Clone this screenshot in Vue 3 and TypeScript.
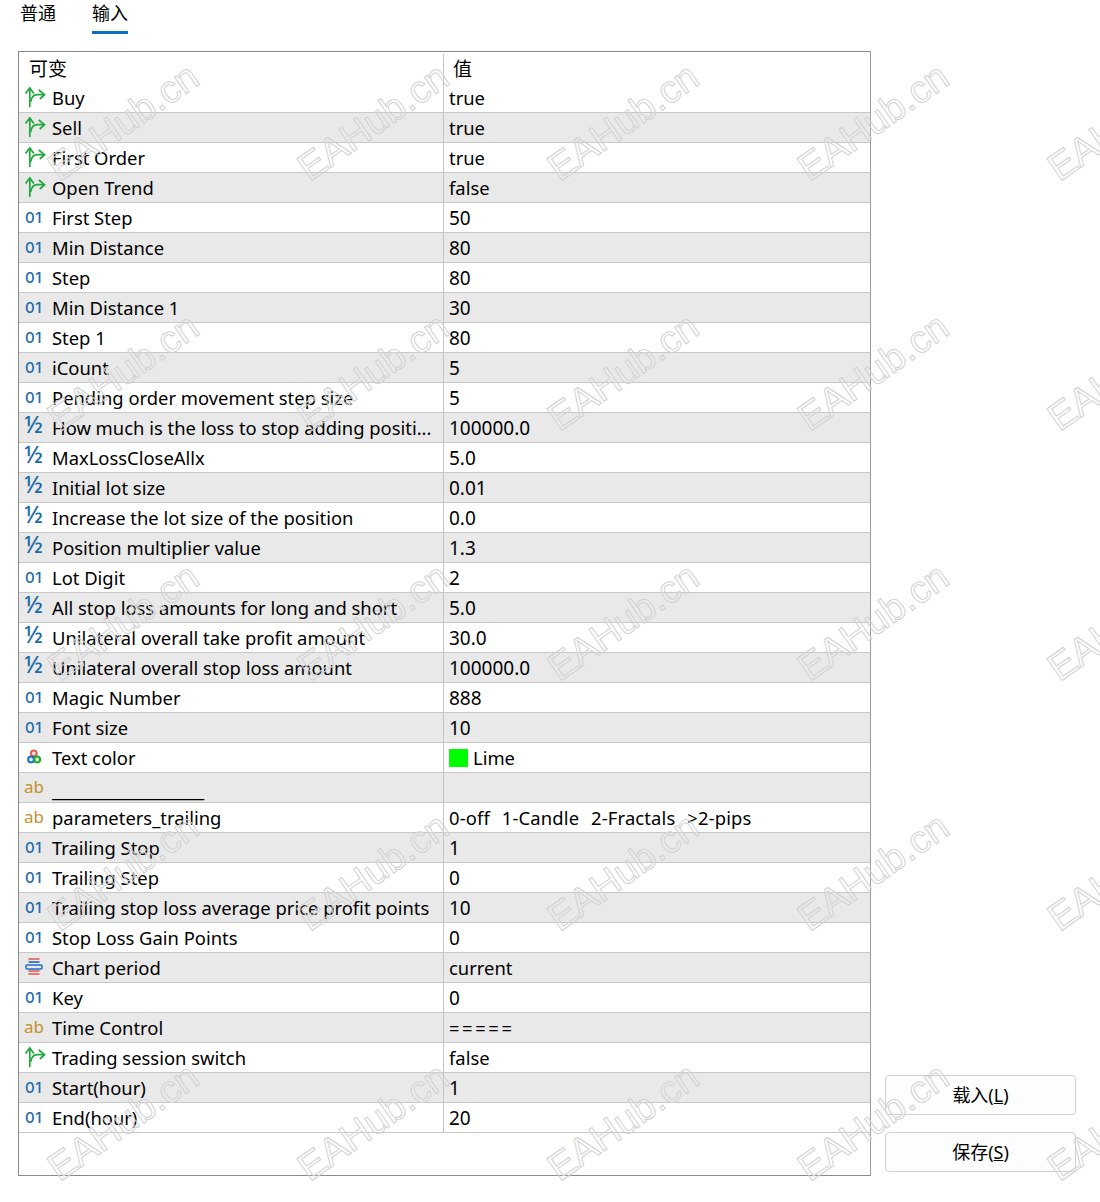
<template>
  <div class="page">
    <nav class="tabs">
      <span class="tab">普通</span>
      <span class="tab active">输入</span>
    </nav>
    <div class="body">
      <div class="table">
        <div class="head">
          <div class="name-col">可变</div>
          <div class="value-col">值</div>
        </div>
        <div v-for="(row, i) in rows" :key="`${row.name}-${i}`" class="row" :class="{ alt: i % 2 === 1 }">
          <div class="name-cell">
            <span class="icon">
              <svg v-if="row.type === 'bool'" width="22" height="22" viewBox="0 0 22 22" fill="none" stroke="#1fa83c" stroke-width="1.7">
                <path d="M4.8 22 V3" />
                <path d="M0.5 8.5 L4.8 3 L8.8 8.5" />
                <path d="M5.5 17 C6.5 12 8 9.7 12 9.7 H19" />
                <path d="M13.8 5 L19.5 9.7 L14.8 14" />
              </svg>
              <span v-else-if="row.type === 'int'" class="i-int">01</span>
              <span v-else-if="row.type === 'float'" class="i-float">½</span>
              <span v-else-if="row.type === 'str'" class="i-str">ab</span>
              <svg v-else-if="row.type === 'color'" class="shift" width="18" height="18" viewBox="0 0 18 18" stroke-width="2">
                <circle cx="8.8" cy="6.3" r="2.9" stroke="#e05a50" fill="#fde4e0" />
                <circle cx="6" cy="12.5" r="2.9" stroke="#1a6fc4" fill="#d2e8ff" />
                <circle cx="12.2" cy="12.5" r="2.9" stroke="#22a830" fill="#d8f5d8" />
              </svg>
              <svg v-else class="shift" width="18" height="18" viewBox="0 0 18 18" fill="none" stroke-width="1.5">
                <path d="M3.5 2 H14.5 M3.5 14 H14.5 M3.5 17 H14.5" stroke="#e0524f" />
                <path d="M3.5 5 H14.5" stroke="#1a5f9e" />
                <rect x="1" y="8" width="16" height="4" rx="1" stroke="#1a6fc4" />
              </svg>
            </span>
            <span class="label" :class="{ line: row.name.startsWith('_') }">{{ row.name }}</span>
          </div>
          <div class="value-cell">
            <span v-if="row.swatch" class="swatch" :style="{ background: row.swatch }"></span>
            <span class="value" :class="valueClass(row.value)">{{ row.value }}</span>
          </div>
        </div>
      </div>
      <div class="actions">
        <button class="btn" type="button">载入(<u>L</u>)</button>
        <button class="btn" type="button">保存(<u>S</u>)</button>
      </div>
    </div>
    <div class="watermarks" aria-hidden="true">
      <span v-for="m in marks" :key="m" class="mark">EAHub.cn</span>
    </div>
  </div>
</template>

<script setup lang="ts">
type ParamType = 'bool' | 'int' | 'float' | 'str' | 'color' | 'period'

interface Param {
  name: string
  value: string
  type: ParamType
  swatch?: string
}

const rows: Param[] = [
  { name: 'Buy', value: 'true', type: 'bool' },
  { name: 'Sell', value: 'true', type: 'bool' },
  { name: 'First Order', value: 'true', type: 'bool' },
  { name: 'Open Trend', value: 'false', type: 'bool' },
  { name: 'First Step', value: '50', type: 'int' },
  { name: 'Min Distance', value: '80', type: 'int' },
  { name: 'Step', value: '80', type: 'int' },
  { name: 'Min Distance 1', value: '30', type: 'int' },
  { name: 'Step 1', value: '80', type: 'int' },
  { name: 'iCount', value: '5', type: 'int' },
  { name: 'Pending order movement step size', value: '5', type: 'int' },
  { name: 'How much is the loss to stop adding positi...', value: '100000.0', type: 'float' },
  { name: 'MaxLossCloseAllx', value: '5.0', type: 'float' },
  { name: 'Initial lot size', value: '0.01', type: 'float' },
  { name: 'Increase the lot size of the position', value: '0.0', type: 'float' },
  { name: 'Position multiplier value', value: '1.3', type: 'float' },
  { name: 'Lot Digit', value: '2', type: 'int' },
  { name: 'All stop loss amounts for long and short', value: '5.0', type: 'float' },
  { name: 'Unilateral overall take profit amount', value: '30.0', type: 'float' },
  { name: 'Unilateral overall stop loss amount', value: '100000.0', type: 'float' },
  { name: 'Magic Number', value: '888', type: 'int' },
  { name: 'Font size', value: '10', type: 'int' },
  { name: 'Text color', value: 'Lime', type: 'color', swatch: '#00ff00' },
  { name: '___________________', value: '', type: 'str' },
  { name: 'parameters_trailing', value: '0-off  1-Candle  2-Fractals  >2-pips', type: 'str' },
  { name: 'Trailing Stop', value: '1', type: 'int' },
  { name: 'Trailing Step', value: '0', type: 'int' },
  { name: 'Trailing stop loss average price profit points', value: '10', type: 'int' },
  { name: 'Stop Loss Gain Points', value: '0', type: 'int' },
  { name: 'Chart period', value: 'current', type: 'period' },
  { name: 'Key', value: '0', type: 'int' },
  { name: 'Time Control', value: '=====', type: 'str' },
  { name: 'Trading session switch', value: 'false', type: 'bool' },
  { name: 'Start(hour)', value: '1', type: 'int' },
  { name: 'End(hour)', value: '20', type: 'int' },
]

const marks = Array.from({ length: 25 }, (_, i) => i)

function valueClass(value: string) {
  if (/^[\d.]+$/.test(value)) return 'num'
  if (value.startsWith('=')) return 'rule'
  return value.includes('  ') ? 'spaced' : ''
}
</script>

<style>
html,
body {
  margin: 0;
  background: #fff;
  overflow: hidden;
}
</style>

<style scoped>
.page {
  position: relative;
  width: 1100px;
  height: 1202px;
  overflow: hidden;
  font-family: "Noto Sans", "Noto Sans CJK SC", sans-serif;
  font-size: 18.4px;
  color: #000;
}

.tabs {
  display: flex;
  gap: 36px;
  height: 34px;
  padding-left: 20px;
  box-sizing: border-box;
}

.tab {
  height: 34px;
  box-sizing: border-box;
  line-height: 27px;
  font-size: 18px;
}

.tab.active {
  border-bottom: 3px solid #0a6fc9;
}

.body {
  display: flex;
  align-items: flex-end;
  gap: 14px;
  padding: 17px 0 0 18px;
}

.table {
  width: 853px;
  height: 1125px;
  box-sizing: border-box;
  border: 1px solid #8a8a8a;
  border-right-color: #9a9aa8;
}

.head {
  display: flex;
  height: 31px;
  padding-top: 2px;
  box-sizing: border-box;
  font-size: 19px;
}

.name-col,
.value-col {
  line-height: 31px;
}

.name-col {
  width: 425px;
  padding-left: 10px;
  box-sizing: border-box;
  border-right: 1px solid #c4c4c4;
}

.value-col {
  padding-left: 9px;
}

.row {
  display: flex;
  height: 30px;
  box-sizing: border-box;
  border-bottom: 1px solid #c8c8c8;
  line-height: 27px;
}

.row.alt {
  background: #e9e9e9;
}

.name-cell {
  display: flex;
  align-items: center;
  width: 425px;
  box-sizing: border-box;
  border-right: 1px solid #c4c4c4;
  white-space: nowrap;
}

.label.line {
  padding-top: 3px;
  letter-spacing: -0.16px;
}

.icon {
  display: flex;
  align-items: center;
  justify-content: center;
  width: 33px;
  height: 29px;
  flex: none;
  padding-bottom: 3px;
  box-sizing: border-box;
  line-height: 1;
}

.shift {
  margin-left: -4px;
}

.i-int {
  font-family: Inter, sans-serif;
  font-size: 15px;
  font-weight: 500;
  color: #1a6aa8;
  letter-spacing: 0.5px;
  margin: 2px 0 0 -4px;
}

.i-float {
  font-size: 23px;
  font-weight: 500;
  color: #1a6aa8;
  margin: -4px 0 0 -4px;
}

.i-str {
  font-size: 17px;
  color: #c8902a;
  margin-left: -3px;
}

.value-cell {
  display: flex;
  align-items: center;
  padding-left: 5px;
  white-space: pre;
}

.value.num {
  padding-top: 2px;
  font-size: 19px;
}

.value.spaced {
  word-spacing: 1px;
  letter-spacing: 0.15px;
}

.value.rule {
  letter-spacing: 2.6px;
}

.swatch {
  width: 19px;
  height: 18px;
  margin-right: 5px;
}

.actions {
  display: flex;
  flex-direction: column;
  gap: 17px;
  padding-bottom: 4px;
}

.btn {
  width: 191px;
  height: 40px;
  padding: 0 0 2px;
  font: inherit;
  font-size: 18px;
  color: #000;
  background: #fdfdfd;
  border: 1px solid #d0d0d0;
  border-radius: 4px;
}

.watermarks {
  position: absolute;
  left: -2px;
  top: -3px;
  display: grid;
  grid-template-columns: repeat(5, 250px);
  grid-auto-rows: 250px;
  pointer-events: none;
}

.mark {
  display: flex;
  align-items: center;
  justify-content: center;
  font-family: "Liberation Sans", sans-serif;
  font-size: 38.5px;
  color: rgba(255, 255, 255, 0.1);
  -webkit-text-stroke: 1px #d2d2d2;
  transform: rotate(-35deg);
}
</style>
